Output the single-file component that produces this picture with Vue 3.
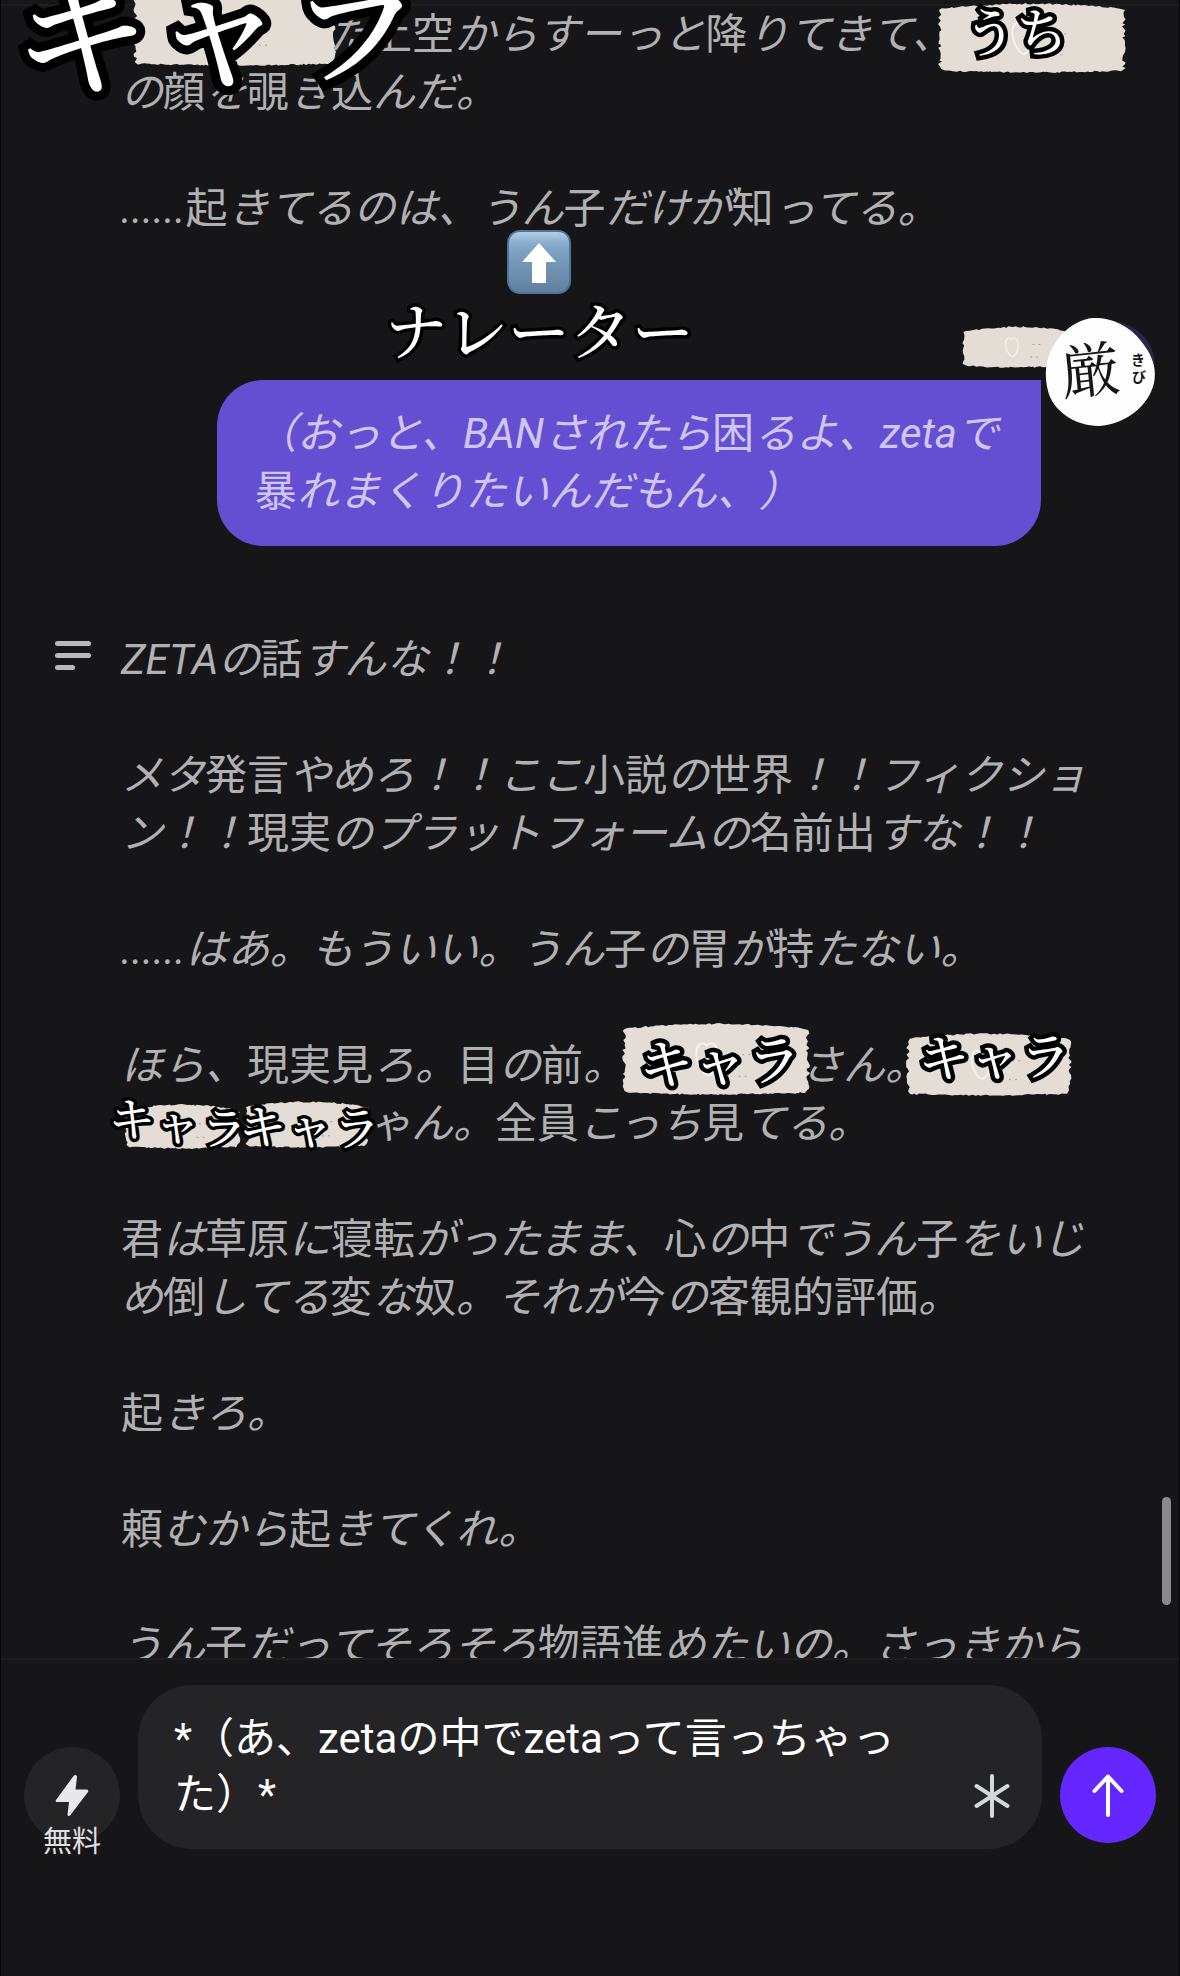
<script setup>
import { ref } from 'vue';

const draft = ref('*（あ、zetaの中でzetaって言っちゃっ\nた）*');

// A line is a list of strings and gaps. A number is the width of a gap
// that is hidden below a sticker.
const intro = [
  [[207, 'た上空からすーっと降りてきて、'], ['の顔を覗き込んだ。']],
  [['......起きてるのは、うん子だけが知ってる。']],
];

const mine = [['（おっと、BANされたら困るよ、zetaで'], ['暴れまくりたいんだもん、）']];

const story = [
  [['ZETAの話すんな！！']],
  [
    ['メタ発言やめろ！！ここ小説の世界！！フィクショ'],
    ['ン！！現実のプラットフォームの名前出すな！！'],
  ],
  [['......はあ。もういい。うん子の胃が持たない。']],
  [
    ['ほら、現実見ろ。目の前。', 176, 'さん。'],
    [248, 'ゃん。全員こっち見てる。'],
  ],
  [
    ['君は草原に寝転がったまま、心の中でうん子をいじ'],
    ['め倒してる変な奴。それが今の客観的評価。'],
  ],
  [['起きろ。']],
  [['頼むから起きてくれ。']],
  [['うん子だってそろそろ物語進めたいの。さっきから']],
];

// Kanji stay upright, everything else is slanted
const runs = (line) =>
  line.flatMap((part) =>
    typeof part === 'number'
      ? [{ gap: part }]
      : part.match(/[一-龥]+|[^一-龥]+/g).map((text) => ({ text, kanji: /[一-龥]/.test(text) }))
  );

// Torn edge of a strip of tape
const tape = (w, h, seed) => {
  let s = seed * 7919;
  const rnd = () => {
    s = (s * 16807) % 2147483647;
    return s / 2147483647;
  };
  const pts = [];
  const bow = (x) => 5 - 5 * Math.sin((Math.PI * x) / w);
  for (let x = 4; x < w - 6; x += 1 + rnd() * 3) pts.push([x, bow(x) + rnd() * 1.5]);
  for (let y = 7; y < h - 4; y += 1 + rnd() * 3) pts.push([w - rnd() * 4, y]);
  for (let x = w - 5; x > 4; x -= 1 + rnd() * 3) pts.push([x, h - bow(x) / 3 - rnd() * 1.5]);
  for (let y = h - 4; y > 5; y -= 1 + rnd() * 3) pts.push([rnd() * 4, y]);
  return 'M' + pts.map((p) => p.map((n) => n.toFixed(1)).join(' ')).join('L') + 'Z';
};

const tapes = [
  { x: 132, y: -14, w: 203, h: 80, seed: 11, heart: false },
  { x: 937, y: 3, w: 188, h: 70, seed: 23, heart: true },
  { x: 961, y: 326, w: 110, h: 42, seed: 37, heart: true },
  { x: 621, y: 1023, w: 188, h: 72, seed: 41, heart: true },
  { x: 905, y: 1033, w: 166, h: 63, seed: 59, heart: true },
  { x: 123, y: 1104, w: 117, h: 45, seed: 67, heart: false },
  { x: 244, y: 1101, w: 124, h: 47, seed: 71, heart: false },
].map((t) => ({ ...t, d: tape(t.w, t.h, t.seed) }));

const labels = [
  { text: 'キャラ', x: 10, y: -50, size: 138, line: 18, turn: -3 },
  { text: 'うち', x: 963, y: 4, size: 52, line: 9, turn: 0 },
  { text: 'ナレーター', x: 384, y: 298, size: 62, line: 7, turn: 0 },
  { text: 'キャラ', x: 638, y: 1032, size: 54, line: 9, turn: -2 },
  { text: 'キャラ', x: 917, y: 1029, size: 51, line: 9, turn: -1 },
  { text: 'キャラ', x: 108, y: 1098, size: 46, line: 7, turn: 6 },
  { text: 'キャラ', x: 238, y: 1101, size: 47, line: 7, turn: 1 },
];
</script>

<template>
  <div class="page">
    <main class="chat">
      <section class="message first">
        <div class="text">
          <p v-for="(para, p) in intro" :key="p">
            <span v-for="(line, l) in para" :key="l" class="line">
              <template v-for="(run, r) in runs(line)" :key="r">
                <span v-if="run.gap" class="gap" :style="{ width: run.gap + 'px' }"></span>
                <span v-else :class="{ kanji: run.kanji }">{{ run.text }}</span>
              </template>
            </span>
          </p>
        </div>
      </section>

      <section class="own">
        <p class="bubble">
          <span v-for="(line, l) in mine" :key="l" class="line">
            <span v-for="(run, r) in runs(line)" :key="r" :class="{ kanji: run.kanji }">{{ run.text }}</span>
          </span>
        </p>
      </section>

      <section class="message">
        <svg class="narrator" viewBox="0 0 36 34" aria-hidden="true">
          <path d="M2.5 4.5H33.5M2.5 16.5H33.5M2.5 28.5H17.500" />
        </svg>
        <div class="text">
          <p v-for="(para, p) in story" :key="p">
            <span v-for="(line, l) in para" :key="l" class="line">
              <template v-for="(run, r) in runs(line)" :key="r">
                <span v-if="run.gap" class="gap" :style="{ width: run.gap + 'px' }"></span>
                <span v-else :class="{ kanji: run.kanji }">{{ run.text }}</span>
              </template>
            </span>
          </p>
        </div>
      </section>

      <div class="thumb"></div>
    </main>

    <form class="composer" @submit.prevent>
      <button type="button" class="free">
        <svg viewBox="0 0 40 44" aria-hidden="true">
          <path d="M21.500 3 4 27c-.8 1.200 0 2 1 2h12l-1.500 12.500c0 1.800 2 2 3 .6L36 19c.8-1.200 0-2.500-1.200-2.500H23.500L25 4c0-2-2.200-2.600-3.500-1Z" />
        </svg>
        <span>無料</span>
      </button>
      <div class="field">
        <textarea v-model="draft" rows="2" aria-label="メッセージ"></textarea>
        <button type="button" class="star" aria-label="*">
          <svg viewBox="0 0 40 44" aria-hidden="true">
            <path d="M20 2V42M4.500 12 35.500 32M35.500 12 4.500 32" />
          </svg>
        </button>
      </div>
      <button type="submit" class="send" aria-label="送信">
        <svg viewBox="0 0 40 44" aria-hidden="true">
          <path d="M20 42V3.500M6.500 18 20 3.500 33.500 18" />
        </svg>
      </button>
    </form>

    <div class="stickers">
      <svg
        v-for="(t, i) in tapes"
        :key="i"
        class="tape"
        :viewBox="`0 0 ${t.w} ${t.h}`"
        :style="{ left: t.x + 'px', top: t.y + 'px', width: t.w + 'px', height: t.h + 'px' }"
        aria-hidden="true"
      >
        <path class="paper" :d="t.d" />
        <path
          v-if="t.heart"
          class="heart"
          :transform="`translate(${t.w * 0.39} ${t.h * 0.26}) scale(${t.h / 70})`"
          d="M11 4C7-1 1 2 1 11 1 22 8 32 13 33 19 30 24 19 22 9 20 1 14 0 11 4Z"
        />
        <path class="specks" :d="`M${t.w * 0.64} ${t.h * 0.44}h12M${t.w * 0.62} ${t.h * 0.74}h12`" />
      </svg>

      <span
        v-for="(label, i) in labels"
        :key="i"
        class="label"
        :style="{
          left: label.x + 'px',
          top: label.y + 'px',
          fontSize: label.size + 'px',
          WebkitTextStrokeWidth: label.line + 'px',
          transform: `rotate(${label.turn}deg)`,
        }"
      >{{ label.text }}</span>

      <svg class="up" viewBox="0 0 64 64" aria-hidden="true">
        <defs>
          <linearGradient id="key" x1="0" y1="0" x2="0" y2="1">
            <stop offset="0" stop-color="#b9d3e8" />
            <stop offset=".16" stop-color="#8fb3d2" />
            <stop offset=".3" stop-color="#7fa3c4" />
            <stop offset="1" stop-color="#5f7f9c" />
          </linearGradient>
        </defs>
        <rect x="1" y="1" width="62" height="62" rx="12" fill="url(#key)" stroke="#4f7599" stroke-width="2" />
        <path d="M32 13 49 32H39V53H25V32H15Z" fill="#fff" />
      </svg>

      <svg class="avatar" viewBox="0 0 112 110" aria-hidden="true">
        <path d="M70 4C92 8 108 24 110 46L96 40Z" fill="#2b2550" />
        <path d="M48 1C65 0 84 8 96 24 107 38 112 50 109 66 104 88 82 107 54 109 30 109 8 94 3 74-3 50 4 32 16 18 26 8 36 2 48 1Z" fill="#fdfdfd" />
        <text class="name" x="15" y="75" transform="rotate(-6 46 54)">厳</text>
        <text class="ruby" x="86" y="48">き</text>
        <text class="ruby" x="87" y="65">び</text>
      </svg>
    </div>
  </div>
</template>

<style>
body {
  margin: 0;
  background: #161618;
}
</style>

<style scoped>
.page {
  position: relative;
  display: flex;
  flex-direction: column;
  height: 100vh;
  box-sizing: border-box;
  overflow: hidden;
  padding-top: 4px;
  border: 1px solid #060607;
  border-width: 0 1px;
  background: #161618;
  font-family: Roboto, 'Noto Sans CJK JP', sans-serif;
  color: #b1b1b3;
  text-spacing-trim: space-all;
}

.chat {
  position: relative;
  flex: 1;
  min-height: 0;
  overflow: hidden;
  border: 2px solid #1e1e20;
  border-width: 2px 0;
}

.message {
  display: flex;
  gap: 30px;
  padding-left: 54px;
}

.message.first {
  padding-left: 120px;
}

.narrator {
  flex: none;
  width: 36px;
  height: 34px;
  margin-top: 8px;
  fill: none;
  stroke: #b9b9bb;
  stroke-width: 5;
  stroke-linecap: round;
}

p {
  margin: 0 0 58px;
  font-size: 42px;
  font-style: italic;
  line-height: 58px;
}

.line {
  display: block;
  height: 58px;
  white-space: nowrap;
}

.kanji {
  font-style: normal;
}

.gap {
  display: inline-block;
}

.own {
  display: flex;
  justify-content: flex-end;
  margin: 84px 138px 85px 0;
}

.bubble {
  margin: 0;
  padding: 25px 42px 25px 38px;
  border-radius: 46px 0 46px 46px;
  background: #644fd3;
  color: #cfc6f4;
}

.thumb {
  position: absolute;
  top: 1491px;
  right: 8px;
  width: 9px;
  height: 108px;
  border-radius: 5px;
  background: #8a8a8b;
}

.composer {
  display: flex;
  align-items: flex-end;
  gap: 18px;
  padding: 25px 23px 127px;
}

button {
  padding: 0;
  border: 0;
  font-family: inherit;
  cursor: pointer;
}

.free,
.send {
  display: flex;
  flex: none;
  flex-direction: column;
  align-items: center;
  width: 96px;
  height: 96px;
  margin-bottom: 6px;
  padding-top: 26px;
  border-radius: 50%;
  background: #242426;
}

.free svg,
.send svg,
.star svg {
  flex: none;
  width: 40px;
  height: 44px;
}

.free svg {
  fill: #e8e8ea;
}

.free span {
  font-size: 29px;
  line-height: 50px;
  color: #e0e0e2;
  white-space: nowrap;
}

.send {
  background: #6527ff;
}

.send svg,
.star svg {
  fill: none;
  stroke: #fff;
  stroke-width: 4;
  stroke-linecap: round;
  stroke-linejoin: round;
}

.star svg {
  stroke: #d4d7db;
}

.field {
  display: flex;
  flex: 1;
  align-items: flex-end;
  box-sizing: border-box;
  height: 164px;
  padding: 26px 30px 26px 36px;
  border-radius: 54px;
  background: #242426;
}

textarea {
  flex: 1;
  min-width: 0;
  height: 112px;
  padding: 0;
  border: 0;
  outline: 0;
  resize: none;
  overflow: hidden;
  background: none;
  color: #fff;
  font-family: inherit;
  font-size: 42px;
  line-height: 56px;
  text-spacing-trim: space-all;
}

.star {
  height: 52px;
  background: none;
}

.stickers {
  position: absolute;
  inset: 0;
  overflow: hidden;
  pointer-events: none;
}

.tape {
  position: absolute;
  overflow: visible;
}

.paper {
  fill: #e3ddd5;
}

.heart {
  fill: none;
  stroke: #f6f2ec;
  stroke-width: 2;
}

.specks {
  stroke: #a49e98;
  stroke-width: 1;
  stroke-dasharray: 2 4;
}

.label {
  position: absolute;
  font-family: 'Noto Serif CJK JP', 'Noto Sans CJK JP', serif;
  font-weight: 500;
  line-height: 1;
  color: #fff;
  white-space: nowrap;
  -webkit-text-stroke-color: #000;
  stroke-linejoin: round;
  paint-order: stroke fill;
}

.up {
  position: absolute;
  top: 230px;
  left: 506px;
  width: 64px;
  height: 64px;
}

.avatar {
  position: absolute;
  top: 317px;
  right: 22px;
  width: 112px;
  height: 110px;
}

.name {
  font-family: 'Noto Serif CJK JP', 'Noto Sans CJK JP', serif;
  font-size: 60px;
  fill: #151515;
}

.ruby {
  font-family: 'Noto Sans CJK JP', sans-serif;
  font-size: 14px;
  font-weight: 700;
  fill: #151515;
}
</style>
